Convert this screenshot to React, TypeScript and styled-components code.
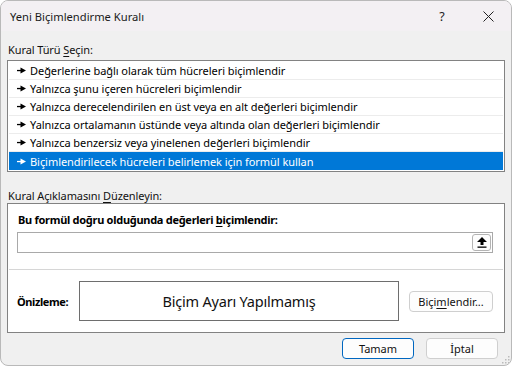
import React from "react";
import styled, { createGlobalStyle } from "styled-components";

const Global = createGlobalStyle`
  html, body { margin: 0; padding: 0; background: #ffffff; }
  body { font-family: "Noto Sans", "Open Sans", sans-serif; }
  * { box-sizing: border-box; }
`;

const FONT = `"Noto Sans", "Open Sans", sans-serif`;

const Window = styled.div`
  position: relative;
  width: 512px;
  height: 366px;
  border: 1px solid #b9b9b9;
  border-radius: 8px;
  overflow: hidden;
  background: #f0f0f0;
  display: flex;
  flex-direction: column;
  font-family: ${FONT};
  font-size: 11px;
  color: #000;
`;

const TitleBar = styled.div`
  height: 30px;
  flex: none;
  display: flex;
  align-items: center;
  padding-left: 9px;
  background: #f3f0f3;
`;

const Title = styled.div`
  flex: 1;
  font-size: 11.2px;
  color: #1a1a1a;
`;

const TitleButton = styled.div<{ $w: number }>`
  width: ${(p) => p.$w}px;
  height: 30px;
  display: flex;
  align-items: center;
  justify-content: center;
  color: #222;
  font-size: 12.5px;
`;

const Body = styled.div`
  flex: 1;
  display: flex;
  flex-direction: column;
  padding: 0 6px 0 6px;
`;

const SectionLabel = styled.div<{ $top: number }>`
  margin-top: ${(p) => p.$top}px;
  height: 15px;
  line-height: 15px;
  padding-left: 1px;
  letter-spacing: -0.1px;
  color: #111;
`;

const U = styled.span`
  text-decoration: underline;
  text-underline-offset: 2px;
`;

const ListBox = styled.div`
  margin-top: 3px;
  border: 1px solid #828282;
  background: #fff;
  padding: 1px;
  display: flex;
  flex-direction: column;
`;

const ListRow = styled.div<{ $selected?: boolean }>`
  height: 18px;
  display: flex;
  align-items: center;
  padding-left: 8px;
  gap: 4px;
  letter-spacing: -0.05px;
  border-bottom: 1px solid ${(p) => (p.$selected ? "#0078d7" : "#ececec")};
  background: ${(p) => (p.$selected ? "#0078d7" : "#fff")};
  color: ${(p) => (p.$selected ? "#fff" : "#000")};
  &:last-child { border-bottom: none; }
`;

const Panel = styled.div`
  border: 1px solid #828282;
  background: #fff;
  height: 130px;
  display: flex;
  flex-direction: column;
`;

const PanelTop = styled.div`
  height: 66px;
  border-bottom: 1px solid #d6d6d6;
  margin: 0 1px;
  padding: 8px 10px 0 8px;
  display: flex;
  flex-direction: column;
`;

const BoldLabel = styled.div`
  font-weight: 700;
  font-size: 11px;
  letter-spacing: -0.28px;
  height: 15px;
  line-height: 15px;
  padding-left: 1px;
`;

const InputBox = styled.div`
  margin-top: 5px;
  height: 21px;
  border: 1px solid #a9a9a9;
  background: #fff;
  display: flex;
  justify-content: flex-end;
  align-items: center;
  padding-right: 1px;
`;

const CollapseButton = styled.div`
  width: 19px;
  height: 17px;
  border: 1px solid #b4b4b4;
  border-radius: 3px;
  background: #fdfdfd;
  display: flex;
  align-items: center;
  justify-content: center;
`;

const PreviewRow = styled.div`
  flex: 1;
  display: flex;
  align-items: center;
  padding: 0 11px 0 9px;
`;

const PreviewLabel = styled.div`
  width: 62px;
  font-weight: 700;
  font-size: 11px;
  letter-spacing: -0.4px;
`;

const PreviewBox = styled.div`
  width: 320px;
  height: 40px;
  border: 1px solid #6e6e6e;
  display: flex;
  align-items: center;
  justify-content: center;
  font-size: 14.5px;
  letter-spacing: -0.2px;
  color: #111;
  margin-bottom: 1px;
`;

const Button = styled.div<{ $w: number; $primary?: boolean }>`
  width: ${(p) => p.$w}px;
  height: 21px;
  border: 1px solid ${(p) => (p.$primary ? "#0067c0" : "#cfcfcf")};
  border-radius: 4px;
  background: #fdfdfd;
  display: flex;
  align-items: center;
  justify-content: center;
  font-size: 11px;
  color: #111;
`;

const Spacer = styled.div`
  flex: 1;
`;

const Footer = styled.div`
  height: 33px;
  display: flex;
  align-items: center;
  justify-content: flex-end;
  gap: 12px;
  padding-right: 7px;
  padding-bottom: 2px;
`;

const Grip = styled.svg`
  position: absolute;
  right: 1px;
  bottom: 1px;
`;

const Arrow: React.FC<{ color: string }> = ({ color }) => (
  <svg width="9" height="7" viewBox="0 0 9 7">
    <rect x="0" y="2.9" width="5" height="1.3" fill={color} />
    <polygon points="3.5,0.6 9,3.5 3.5,6.4" fill={color} />
  </svg>
);

const items = [
  "Değerlerine bağlı olarak tüm hücreleri biçimlendir",
  "Yalnızca şunu içeren hücreleri biçimlendir",
  "Yalnızca derecelendirilen en üst veya en alt değerleri biçimlendir",
  "Yalnızca ortalamanın üstünde veya altında olan değerleri biçimlendir",
  "Yalnızca benzersiz veya yinelenen değerleri biçimlendir",
  "Biçimlendirilecek hücreleri belirlemek için formül kullan",
];

export default function App() {
  return (
    <>
      <Global />
      <Window>
        <TitleBar>
          <Title>Yeni Biçimlendirme Kuralı</Title>
          <TitleButton $w={46}>?</TitleButton>
          <TitleButton $w={46}>
            <svg width="11" height="11" viewBox="0 0 11 11">
              <path d="M0.5 0.5 L10.5 10.5 M10.5 0.5 L0.5 10.5" stroke="#222" strokeWidth="1" />
            </svg>
          </TitleButton>
        </TitleBar>
        <Body>
          <SectionLabel $top={11}>
            Kural Türü <U>S</U>eçin:
          </SectionLabel>
          <ListBox>
            {items.map((t, i) => {
              const sel = i === items.length - 1;
              return (
                <ListRow key={t} $selected={sel}>
                  <Arrow color={sel ? "#fff" : "#000"} />
                  <span>{t}</span>
                </ListRow>
              );
            })}
          </ListBox>
          <SectionLabel $top={16}>
            Kural Açıklamasını <U>D</U>üzenleyin:
          </SectionLabel>
          <Panel>
            <PanelTop>
              <BoldLabel>
                Bu formül doğru olduğunda değerleri <U>b</U>içimlendir:
              </BoldLabel>
              <InputBox>
                <CollapseButton>
                  <svg width="10" height="11" viewBox="0 0 10 11">
                    <polygon points="5,0 10,5 6.5,5 6.5,8 3.5,8 3.5,5 0,5" fill="#000" />
                    <rect x="0.5" y="9.5" width="9" height="1.3" fill="#000" />
                  </svg>
                </CollapseButton>
              </InputBox>
            </PanelTop>
            <PreviewRow>
              <PreviewLabel>Önizleme:</PreviewLabel>
              <PreviewBox>Biçim Ayarı Yapılmamış</PreviewBox>
              <Spacer />
              <Button $w={84}>
                Biçi<U>m</U>lendir...
              </Button>
            </PreviewRow>
          </Panel>
          <Footer>
            <Button $w={72} $primary>
              Tamam
            </Button>
            <Button $w={72}>İptal</Button>
          </Footer>
        </Body>
        <Grip width="8" height="8" viewBox="0 0 8 8">
          <rect x="6" y="0" width="1.5" height="1.5" fill="#bbb" />
          <rect x="3" y="3" width="1.5" height="1.5" fill="#bbb" />
          <rect x="6" y="3" width="1.5" height="1.5" fill="#bbb" />
          <rect x="0" y="6" width="1.5" height="1.5" fill="#bbb" />
          <rect x="3" y="6" width="1.5" height="1.5" fill="#bbb" />
          <rect x="6" y="6" width="1.5" height="1.5" fill="#bbb" />
        </Grip>
      </Window>
    </>
  );
}
